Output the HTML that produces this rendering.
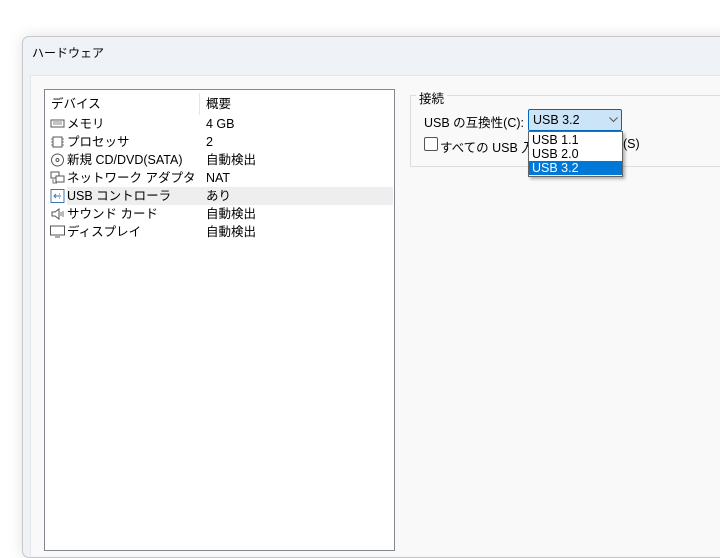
<!DOCTYPE html>
<html><head><meta charset="utf-8"><style>
body{margin:0;width:720px;height:540px;background:#fff;overflow:hidden;position:relative;font-family:"Liberation Sans","Noto Sans CJK JP",sans-serif;font-size:12.5px;color:#000}
.win{position:absolute;left:22px;top:36px;width:710px;height:520px;background:#eff3f8;border:1px solid #c8c8c8;border-radius:7px;box-shadow:0 0 14px rgba(0,0,0,.12)}
.title{position:absolute;left:32px;top:44px;font-size:12px}
.panel{position:absolute;left:30px;top:75px;width:700px;height:480px;background:#f9f9f9;border-left:1px solid #e6e6e6;border-top:1px solid #e6e6e6}
.list{position:absolute;left:44px;top:89px;width:349px;height:460px;background:#fff;border:1px solid #828790}
.row{position:absolute;left:0;height:18px;line-height:18px;width:348px}
.c1{position:absolute;left:22px}.c2{position:absolute;left:161px}
.ic{position:absolute;left:5px;top:2px;width:15px;height:14px}
.grp{position:absolute;left:410px;top:95px;width:320px;height:70px;border:1px solid #dcdcdc}
.abs{position:absolute}
</style></head><body>
<div class="win"></div>
<div class="title">ハードウェア</div>
<div class="panel"></div>
<div class="list">
 <div class="row" style="top:3px;height:22px;line-height:22px"><span class="abs" style="left:6px">デバイス</span><span class="abs" style="left:161px">概要</span><div class="abs" style="left:154px;top:0;width:1px;height:22px;background:#e5e5e5"></div></div>
 <div class="row" style="top:25px"><svg class="ic" viewBox="0 0 15 14"><rect x="1" y="3" width="13" height="7" fill="none" stroke="#555"/><path d="M3 5h9M3 7h9" stroke="#888"/></svg><span class="c1">メモリ</span><span class="c2">4 GB</span></div>
 <div class="row" style="top:43px"><svg class="ic" viewBox="0 0 15 14"><rect x="3" y="2" width="9" height="10" fill="none" stroke="#555"/><path d="M1 4h2M1 7h2M1 10h2M12 4h2M12 7h2M12 10h2" stroke="#777"/></svg><span class="c1">プロセッサ</span><span class="c2">2</span></div>
 <div class="row" style="top:61px"><svg class="ic" viewBox="0 0 15 14"><circle cx="7.5" cy="7" r="6" fill="none" stroke="#555"/><circle cx="7.5" cy="7" r="1.5" fill="none" stroke="#555"/></svg><span class="c1">新規 CD/DVD(SATA)</span><span class="c2">自動検出</span></div>
 <div class="row" style="top:79px"><svg class="ic" viewBox="0 0 15 14"><rect x="1" y="1" width="8" height="6" fill="none" stroke="#555"/><rect x="6" y="5" width="8" height="6" fill="#fff" stroke="#555"/><path d="M3 8v4h4" stroke="#777" fill="none"/></svg><span class="c1">ネットワーク アダプタ</span><span class="c2">NAT</span></div>
 <div class="row" style="top:97px"><div class="abs" style="left:22px;top:0;width:326px;height:18px;background:#eeeeee"></div><svg class="ic" viewBox="0 0 15 14"><rect x="1" y="0.5" width="13" height="13" fill="none" stroke="#3c78b4"/><path d="M4 7h7M6 5l-2 2 2 2M9 5h1M9 9h1" stroke="#3c78b4" fill="none"/></svg><span class="c1">USB コントローラ</span><span class="c2">あり</span></div>
 <div class="row" style="top:115px"><svg class="ic" viewBox="0 0 15 14"><path d="M2 5h3l4-3v10l-4-3H2z" fill="none" stroke="#555"/><path d="M11 5v4M13 4v6" stroke="#777"/></svg><span class="c1">サウンド カード</span><span class="c2">自動検出</span></div>
 <div class="row" style="top:133px"><svg class="ic" viewBox="0 0 15 14"><rect x="0.5" y="1" width="14" height="9" fill="none" stroke="#555"/><path d="M5 12h5" stroke="#555"/></svg><span class="c1">ディスプレイ</span><span class="c2">自動検出</span></div>
</div>
<div class="grp"></div>
<div class="abs" style="left:416px;top:88px;padding:0 3px;background:#f9f9f9">接続</div>
<div class="abs" style="left:424px;top:112px">USB の互換性(C):</div>
<div class="abs" style="left:528px;top:109px;width:92px;height:20px;background:#cce4f7;border:1px solid #0067c0;border-radius:2px"><span class="abs" style="left:4px;top:3px">USB 3.2</span><svg class="abs" style="left:80px;top:7px" width="9" height="6"><path d="M0.5 0.5l4 4 4-4" stroke="#555" fill="none"/></svg></div>
<div class="abs" style="left:424px;top:137px;width:12px;height:12px;border:1px solid #555;border-radius:2px;background:#fff"></div>
<div class="abs" style="left:440px;top:137px">すべての USB 入力</div>
<div class="abs" style="left:623px;top:137px">(S)</div>
<div class="abs" style="left:528px;top:131px;width:93px;height:44px;background:#fff;border:1px solid #646464;box-shadow:2px 2px 3px rgba(0,0,0,.3)">
 <div class="abs" style="left:3px;top:1px">USB 1.1</div>
 <div class="abs" style="left:3px;top:15px">USB 2.0</div>
 <div class="abs" style="left:0;top:29px;width:93px;height:14px;background:#0078d7;color:#fff"><span class="abs" style="left:3px;top:0">USB 3.2</span></div>
</div>
</body></html>
